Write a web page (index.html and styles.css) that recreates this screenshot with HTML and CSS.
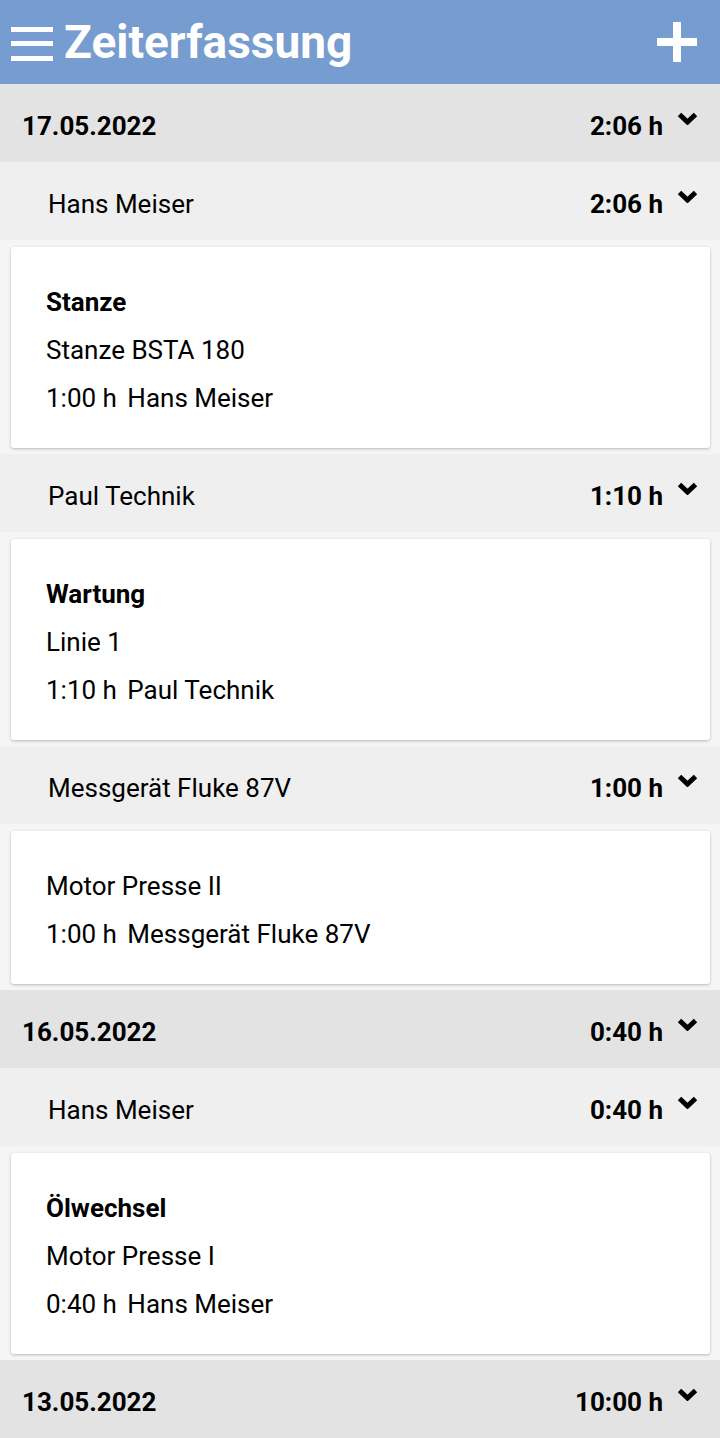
FILE: index.html
```html
<!DOCTYPE html>
<html lang="de">
<head>
  <meta charset="UTF-8">
  <meta name="viewport" content="width=device-width, initial-scale=1.0">
  <title>Zeiterfassung</title>
  <link rel="stylesheet" href="styles.css">
</head>
<body>

  <header class="app-bar">
    <svg class="menu-icon" width="42" height="36" viewBox="0 0 42 36">
      <rect x="0" y="2" width="42" height="5" fill="#fff"/>
      <rect x="0" y="16" width="42" height="5" fill="#fff"/>
      <rect x="0" y="31" width="42" height="5" fill="#fff"/>
    </svg>
    <h1 class="app-title">Zeiterfassung</h1>
    <svg class="add-icon" width="40" height="40" viewBox="0 0 40 40">
      <rect x="16" y="0" width="8" height="40" fill="#fff"/>
      <rect x="0" y="16" width="40" height="8" fill="#fff"/>
    </svg>
  </header>

  <!-- 17.05.2022 -->
  <div class="row date-row">
    <span class="row-label">17.05.2022</span>
    <span class="row-time">2:06 h</span>
    <svg class="chevron" width="21" height="13" viewBox="0 0 21 13"><polyline points="2.5,2.5 10.5,10 18.5,2.5" fill="none" stroke="#000" stroke-width="5"/></svg>
  </div>

  <div class="row person-row">
    <span class="row-label">Hans Meiser</span>
    <span class="row-time">2:06 h</span>
    <svg class="chevron" width="21" height="13" viewBox="0 0 21 13"><polyline points="2.5,2.5 10.5,10 18.5,2.5" fill="none" stroke="#000" stroke-width="5"/></svg>
  </div>
  <div class="card">
    <div class="card-title">Stanze</div>
    <div>Stanze BSTA 180</div>
    <div><span class="duration">1:00 h</span> Hans Meiser</div>
  </div>

  <div class="row person-row">
    <span class="row-label">Paul Technik</span>
    <span class="row-time">1:10 h</span>
    <svg class="chevron" width="21" height="13" viewBox="0 0 21 13"><polyline points="2.5,2.5 10.5,10 18.5,2.5" fill="none" stroke="#000" stroke-width="5"/></svg>
  </div>
  <div class="card">
    <div class="card-title">Wartung</div>
    <div>Linie 1</div>
    <div><span class="duration">1:10 h</span> Paul Technik</div>
  </div>

  <div class="row person-row">
    <span class="row-label">Messgerät Fluke 87V</span>
    <span class="row-time">1:00 h</span>
    <svg class="chevron" width="21" height="13" viewBox="0 0 21 13"><polyline points="2.5,2.5 10.5,10 18.5,2.5" fill="none" stroke="#000" stroke-width="5"/></svg>
  </div>
  <div class="card">
    <div>Motor Presse II</div>
    <div><span class="duration">1:00 h</span> Messgerät Fluke 87V</div>
  </div>

  <!-- 16.05.2022 -->
  <div class="row date-row">
    <span class="row-label">16.05.2022</span>
    <span class="row-time">0:40 h</span>
    <svg class="chevron" width="21" height="13" viewBox="0 0 21 13"><polyline points="2.5,2.5 10.5,10 18.5,2.5" fill="none" stroke="#000" stroke-width="5"/></svg>
  </div>

  <div class="row person-row">
    <span class="row-label">Hans Meiser</span>
    <span class="row-time">0:40 h</span>
    <svg class="chevron" width="21" height="13" viewBox="0 0 21 13"><polyline points="2.5,2.5 10.5,10 18.5,2.5" fill="none" stroke="#000" stroke-width="5"/></svg>
  </div>
  <div class="card">
    <div class="card-title">Ölwechsel</div>
    <div>Motor Presse I</div>
    <div><span class="duration">0:40 h</span> Hans Meiser</div>
  </div>

  <!-- 13.05.2022 -->
  <div class="row date-row">
    <span class="row-label">13.05.2022</span>
    <span class="row-time">10:00 h</span>
    <svg class="chevron" width="21" height="13" viewBox="0 0 21 13"><polyline points="2.5,2.5 10.5,10 18.5,2.5" fill="none" stroke="#000" stroke-width="5"/></svg>
  </div>

</body>
</html>
```

FILE: styles.css
```css
body {
  margin: 0;
  font-family: Roboto, "Liberation Sans", sans-serif;
  background: #f5f5f5;
  color: #000;
  height: 1438px;
  overflow: hidden;
}
.app-bar {
  display: flex;
  align-items: center;
  height: 84px;
  background: #779cd0;
  padding: 0 23px 0 11px;
  box-sizing: border-box;
}
.menu-icon {
  margin-top: 2px;
}
.app-title {
  flex: 1;
  margin: 0 0 0 11px;
  color: #fff;
  font-size: 46px;
  font-weight: bold;
}
.row {
  display: flex;
  align-items: center;
  height: 78px;
  font-size: 26px;
  padding-right: 22px;
}
.date-row {
  background: #e3e3e3;
  padding-left: 22px;
  font-weight: bold;
}
.person-row {
  background: #efefef;
  padding-left: 48px;
}
.row-label {
  flex: 1;
  padding-top: 5px;
}
.row-time {
  font-weight: bold;
  padding-top: 5px;
}
.chevron {
  margin: 0 0 10px 14px;
}
.card {
  background: #fff;
  margin: 7px 10px 6px 11px;
  padding: 31px 35px 26px;
  border-radius: 3px;
  box-shadow: 0 1px 3px rgba(0, 0, 0, 0.25);
  font-size: 26px;
  line-height: 48px;
}
.card-title {
  font-weight: bold;
}
.duration {
  margin-right: 4px;
}
```
